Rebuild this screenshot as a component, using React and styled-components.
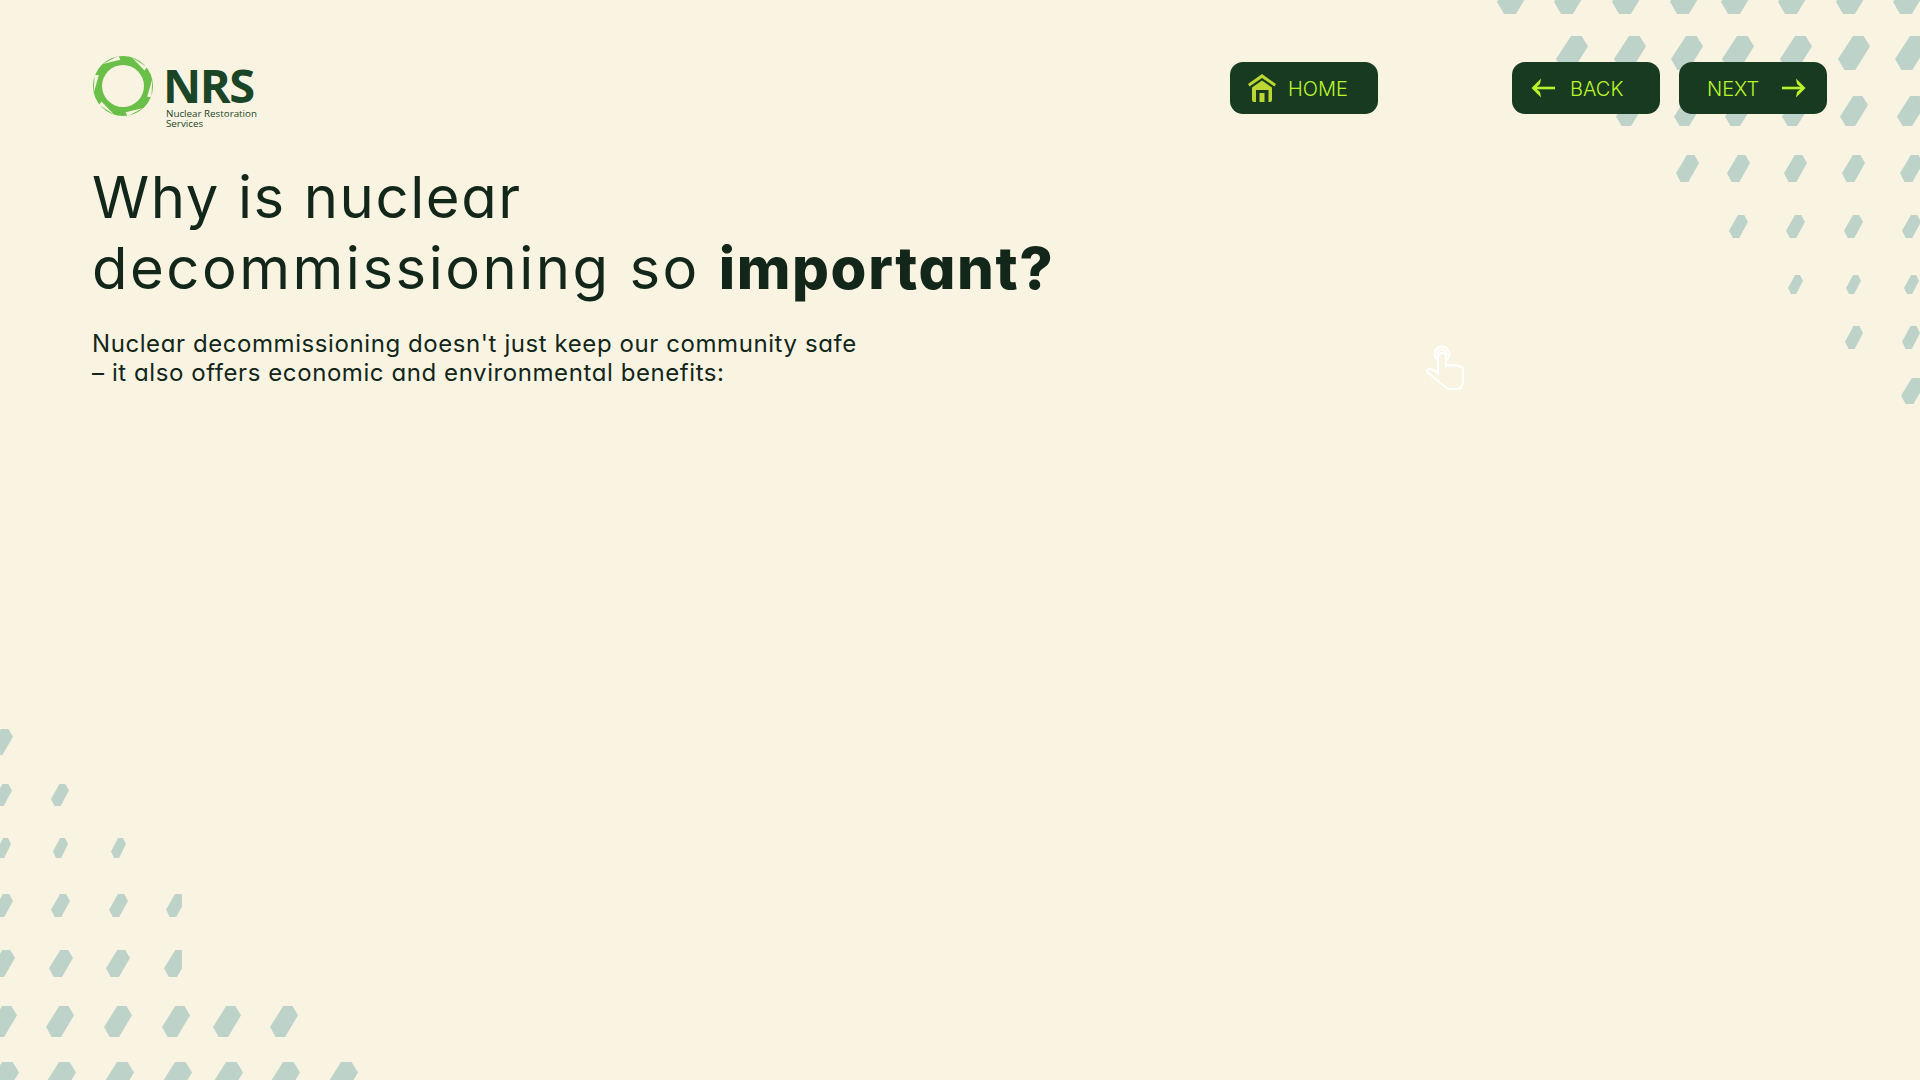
import styled, { createGlobalStyle } from "styled-components";

const GlobalStyle = createGlobalStyle`
  html, body {
    margin: 0;
    padding: 0;
    background: #f9f4e2;
  }
`;

const TOP_RIGHT = [
  { y: -24, w: 35, h: 38, xs: [1497, 1554, 1612, 1670, 1721, 1778, 1836, 1893] },
  { y: 36, w: 32, h: 34, xs: [1556, 1614, 1671, 1722, 1780, 1838, 1895] },
  { y: 96, w: 28, h: 30, xs: [1616, 1674, 1725, 1782, 1840, 1897] },
  { y: 155, w: 23, h: 27, xs: [1676, 1727, 1784, 1842, 1900] },
  { y: 215, w: 19, h: 23, xs: [1729, 1786, 1844, 1902] },
  { y: 275, w: 15, h: 19, xs: [1788, 1846, 1904] },
  { y: 326, w: 18, h: 23, xs: [1845, 1902] },
  { y: 378, w: 23, h: 26, xs: [1901] },
];

const BOTTOM_LEFT = [
  { y: 729, w: 23, h: 26, xs: [-10] },
  { y: 784, w: 18, h: 22, xs: [-6, 51] },
  { y: 838, w: 15, h: 20, xs: [-4, 53, 111] },
  { y: 894, w: 19, h: 23, xs: [-6, 51, 109, 166] },
  { y: 950, w: 24, h: 27, xs: [-9, 49, 106, 164] },
  { y: 1006, w: 28, h: 31, xs: [-11, 46, 104, 162, 213, 270] },
  { y: 1062, w: 32, h: 35, xs: [-13, 44, 102, 160, 211, 268, 326] },
];

function hexPoints(x, y, w, h) {
  const pts = [
    [0.47, 0],
    [0.8, 0],
    [1, 0.3],
    [0.54, 1],
    [0.2, 1],
    [0, 0.68],
  ];
  return pts.map(([a, b]) => `${x + a * w},${y + b * h}`).join(" ");
}

function Pattern({ rows }) {
  return rows.flatMap((row) =>
    row.xs.map((x) => (
      <polygon key={`${row.y}-${x}`} points={hexPoints(x, row.y, row.w, row.h)} />
    ))
  );
}

function Logo() {
  return (
    <LogoWrap>
      <svg width="62" height="62" viewBox="-31 -31 62 62">
        <circle r="30" fill="#69bf48" />
        <circle r="21" fill="#f9f4e2" />
        {[0, 60, 120, 180, 240, 300].map((angle) => (
          <polygon
            key={angle}
            points="9,-28.5 24,-19 21.5,-15.5"
            fill="#f9f4e2"
            transform={`rotate(${angle})`}
          />
        ))}
      </svg>
      <LogoText>
        <LogoName>NRS</LogoName>
        <LogoSub>
          Nuclear Restoration
          <br />
          Services
        </LogoSub>
      </LogoText>
    </LogoWrap>
  );
}

function HomeIcon() {
  return (
    <svg width="30" height="30" viewBox="0 0 30 30" fill="#bcd633">
      <path d="M15 1 L29 11 L27.5 13.5 L15 5 L2.5 13.5 L1 11 Z" />
      <path
        d="M15 7.5 L25 14.5 V27 a2 2 0 0 1 -2 2 H7 a2 2 0 0 1 -2 -2 V14.5 Z M9 17 V29 H21.5 V17 Z"
        fillRule="evenodd"
      />
      <rect x="12.5" y="20" width="5" height="9" />
    </svg>
  );
}

function ArrowIcon({ flip }) {
  return (
    <svg
      width="24"
      height="20"
      viewBox="0 0 24 20"
      fill="#b9f22c"
      style={flip ? { transform: "scaleX(-1)" } : undefined}
    >
      <rect x="0" y="8.7" width="21" height="2.6" />
      <path d="M14 0.5 L23.5 10 L14 19.5 L15 14 L19.5 10 L15 6 Z" />
    </svg>
  );
}

export default function App() {
  return (
    <Page>
      <GlobalStyle />
      <Decoration viewBox="0 0 1920 1080">
        <Pattern rows={TOP_RIGHT} />
        <defs>
          <clipPath id="leftClip">
            <rect x="0" y="0" width="182" height="977" />
            <rect x="0" y="977" width="1920" height="103" />
          </clipPath>
        </defs>
        <g clipPath="url(#leftClip)">
          <Pattern rows={BOTTOM_LEFT} />
        </g>
      </Decoration>

      <Header>
        <Logo />
        <Nav>
          <HomeButton>
            <HomeIcon />
            <ButtonLabel>HOME</ButtonLabel>
          </HomeButton>
          <BackButton>
            <ArrowIcon flip />
            <ButtonLabel>BACK</ButtonLabel>
          </BackButton>
          <NextButton>
            <ButtonLabel>NEXT</ButtonLabel>
            <ArrowIcon />
          </NextButton>
        </Nav>
      </Header>

      <Title>
        <TitleLine $spacing="1.6px">Why is nuclear</TitleLine>
        <TitleLine $spacing="2.5px">
          decommissioning so <strong>important?</strong>
        </TitleLine>
      </Title>
      <Intro>
        Nuclear decommissioning doesn't just keep our community safe
        <br />– it also offers economic and environmental benefits:
      </Intro>

      <Pointer width="70" height="70" viewBox="0 0 70 70">
        <circle cx="32" cy="24" r="4.5" />
        <circle cx="32" cy="24" r="7.5" />
        <path
          d="M28 43 V27 a4 4 0 0 1 8 0 V36 q2.5 -2 4 0 q2.5 -2 4 0 q2.5 -2 4 0 q5 0 5 4 V50 q0 9 -6 9 H38 L17 42 q0 -3 3 -3 q3 0 8 4 z"
          fill="#f9f4e2"
        />
      </Pointer>
    </Page>
  );
}

const Page = styled.div`
  position: relative;
  width: 1920px;
  height: 1080px;
  box-sizing: border-box;
  padding: 55px 93px 0 92px;
  overflow: hidden;
  background: #f9f4e2;
  color: #12261a;
  font-family: Inter, "Liberation Sans", sans-serif;
`;

const Decoration = styled.svg`
  position: absolute;
  inset: 0;
  width: 1920px;
  height: 1080px;
  fill: #bdd3c9;
`;

const Header = styled.header`
  position: relative;
  display: flex;
  justify-content: space-between;
  align-items: flex-start;
  height: 75px;
`;

const LogoWrap = styled.div`
  display: flex;
  gap: 9px;
  align-items: flex-start;
`;

const LogoText = styled.div`
  display: flex;
  flex-direction: column;
  padding-top: 8px;
  color: #1b4527;
  font-family: "Open Sans", sans-serif;
`;

const LogoName = styled.div`
  font-size: 47px;
  font-weight: 700;
  line-height: 44px;
  letter-spacing: -1.5px;
`;

const LogoSub = styled.div`
  margin: 2px 0 0 3px;
  font-size: 9.8px;
  line-height: 10px;
`;

const Nav = styled.nav`
  display: flex;
  gap: 19px;
  padding-top: 7px;
`;

const NavButton = styled.button`
  display: flex;
  align-items: center;
  box-sizing: border-box;
  width: 148px;
  height: 52px;
  border: 0;
  border-radius: 13px;
  background: #173a20;
  color: #bdf52c;
  font-family: Inter, sans-serif;
  font-size: 20px;
  font-weight: 300;
`;

const ButtonLabel = styled.span`
  padding-top: 2px;
`;

const HomeButton = styled(NavButton)`
  gap: 11px;
  padding: 0 0 0 17px;
  margin-right: 115px;
`;

const BackButton = styled(NavButton)`
  gap: 15px;
  padding: 0 0 0 19px;
`;

const NextButton = styled(NavButton)`
  justify-content: space-between;
  padding: 0 21px 0 28px;
`;

const Title = styled.h1`
  position: relative;
  margin: 32px 0 0;
  font-size: 58px;
  font-weight: 400;
  line-height: 71px;
  font-feature-settings: "cv11" 1;
`;

const TitleLine = styled.span`
  display: block;
  letter-spacing: ${(props) => props.$spacing};
  white-space: nowrap;

  strong {
    font-weight: 800;
    letter-spacing: 1.6px;
  }
`;

const Intro = styled.p`
  position: relative;
  margin: 25px 0 0;
  font-size: 24px;
  line-height: 29px;
  letter-spacing: 0.58px;
  font-feature-settings: "cv11" 1;
`;

const Pointer = styled.svg`
  position: absolute;
  left: 1410px;
  top: 330px;
  fill: none;
  stroke: #ffffff;
  stroke-width: 2;
`;
